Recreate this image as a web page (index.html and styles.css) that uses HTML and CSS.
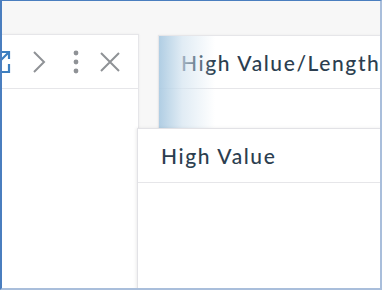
FILE: index.html
```html
<!DOCTYPE html>
<html>
<head>
<meta charset="utf-8">
<link rel="stylesheet" href="styles.css">
</head>
<body>
<div class="frame">
  <div class="board">
    <div class="card card-left">
      <div class="card-head tools">
        <svg class="ico" width="24" height="24" viewBox="0 0 24 24">
          <path d="M9 2 H1 V22 H19 V14" fill="none" stroke="#3d7fc0" stroke-width="2.2"/>
          <path d="M12 2 H19 V9 M19 2 L10 11" fill="none" stroke="#3d7fc0" stroke-width="2.2"/>
        </svg>
        <svg class="ico" width="24" height="24" viewBox="0 0 24 24">
          <path d="M7 2 L17 12 L7 22" fill="none" stroke="#8f9296" stroke-width="2"/>
        </svg>
        <svg class="ico" width="24" height="24" viewBox="0 0 24 24">
          <circle cx="12" cy="3" r="2.4" fill="#8f9296"/>
          <circle cx="12" cy="12" r="2.4" fill="#8f9296"/>
          <circle cx="12" cy="21" r="2.4" fill="#8f9296"/>
        </svg>
        <svg class="ico ico-x" width="24" height="24" viewBox="0 0 24 24">
          <path d="M3 3 L21 21 M21 3 L3 21" fill="none" stroke="#8f9296" stroke-width="2"/>
        </svg>
      </div>
    </div>
    <div class="card card-right">
      <div class="card-head"><span class="title">High Value/Length</span></div>
    </div>
  </div>
  <div class="card drag">
    <div class="card-head"><span class="title">High Value</span></div>
  </div>
</div>
</body>
</html>
```
FILE: styles.css
```css
html, body {
  margin: 0;
  padding: 0;
  background: #ffffff;
}
.frame {
  position: relative;
  width: 382px;
  height: 290px;
  box-sizing: border-box;
  border-top: 1px solid #4a7ebf;
  border-left: 2px solid #4a7ebf;
  border-right: 2px solid #a9bedb;
  border-bottom: 2px solid #a9bedb;
  background: #f7f7f7;
  overflow: hidden;
  font-family: "Lato", "Open Sans", sans-serif;
}
.board {
  display: flex;
  gap: 19px;
  padding-top: 33px;
  margin-left: -12px;
  height: 100%;
  box-sizing: border-box;
}
.card {
  background: #ffffff;
  border: 1px solid #e6e6e9;
  box-shadow: 0 0 2px rgba(0, 0, 0, 0.06);
  box-sizing: border-box;
}
.card-left {
  width: 149px;
  flex: none;
  height: 300px;
}
.card-right {
  flex: none;
  width: 260px;
  height: 300px;
  margin-top: 1px;
  position: relative;
}
.card-right::before {
  content: "";
  position: absolute;
  left: 0;
  top: 0;
  bottom: 0;
  width: 56px;
  background: linear-gradient(to right, rgba(172, 203, 226, 0.95) 0%, rgba(212, 228, 240, 0.7) 42%, rgba(255, 255, 255, 0) 100%);
  z-index: 2;
}
.card-head {
  height: 54px;
  border-bottom: 1px solid #e6e6e9;
  display: flex;
  align-items: center;
  padding-left: 23px;
  box-sizing: border-box;
}
.card-right .card-head {
  height: 53px;
  padding-left: 22px;
}
.tools {
  padding-left: 0;
  justify-content: flex-end;
  padding-right: 16px;
  gap: 13px;
}
.ico {
  display: block;
  flex: none;
}
.ico-x {
  margin-left: -3px;
}
.title {
  font-size: 21px;
  font-weight: 500;
  color: #2c3e50;
  white-space: nowrap;
  letter-spacing: 1.6px;
}
.drag {
  position: absolute;
  z-index: 3;
  left: 135px;
  top: 127px;
  width: 280px;
  height: 200px;
  border-color: #e2e2e6;
  box-shadow: -1px 0 3px rgba(0, 0, 0, 0.08);
}
.drag .card-head {
  height: 54px;
}
```
